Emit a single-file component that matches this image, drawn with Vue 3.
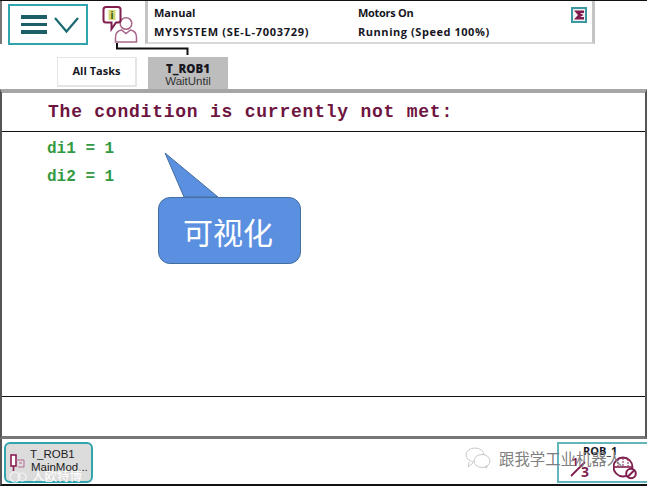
<template>
  <div class="screen">
    <header class="top">
      <button class="menu" type="button">
        <span class="bars"><i></i><i></i><i></i></span>
        <svg class="chev" width="26" height="18" viewBox="0 0 26 18"><path d="M1 2 L12.500 15.500 L24 2" fill="none" stroke="#1c6a72" stroke-width="2.200"/></svg>
      </button>
      <div class="notif">
        <svg width="40" height="43" viewBox="0 0 40 43">
          <circle cx="26" cy="22.500" r="5.800" fill="#fff" stroke="#a7668a" stroke-width="1.500"/>
          <path d="M15.500 41 V36.500 Q15.500 30 21.500 29 L26 32.500 L30.500 29 Q36.500 30 36.500 36.500 V41 Z" fill="#fff" stroke="#a7668a" stroke-width="1.500"/>
          <path d="M6 6 H18 Q20.500 6 20.500 8.500 V19 Q20.500 21.500 18 21.500 H16 L11.500 28 V21.500 H6 Q3.500 21.500 3.500 19 V8.500 Q3.500 6 6 6 Z" fill="#fff" stroke="#7f1d4e" stroke-width="2"/>
          <rect x="8.500" y="9" width="7" height="10" fill="#d5d877"/>
          <text x="12" y="18" text-anchor="middle" class="itxt">i</text>
        </svg>
      </div>
      <div class="status">
        <div class="scol first">
          <div>Manual</div>
          <div class="sys">MYSYSTEM (SE-L-7003729)</div>
        </div>
        <div class="scol">
          <div class="motors">Motors On</div>
          <div class="run">Running (Speed 100%)</div>
        </div>
        <svg class="speed" width="16" height="16" viewBox="0 0 16 16">
          <rect width="16" height="16" fill="#3a98a0"/>
          <rect x="2" y="2" width="12" height="12" fill="#f4f0f2"/>
          <path d="M3 3.500 H13 V6 H9 L12.500 8 L9 10 H13 V12.500 H3 L7 8 Z" fill="#7f1d4e"/>
        </svg>
      </div>
    </header>

    <div class="tabs">
      <svg class="link" width="74" height="14" viewBox="0 0 74 14"><path d="M1 0 V5.500 H71.500 V12" fill="none" stroke="#111" stroke-width="2"/></svg>
      <div class="tab plain">All Tasks</div>
      <div class="tab active"><b>T_ROB1</b><span>WaitUntil</span></div>
    </div>

    <main class="panel">
      <div class="head">The condition is currently not met:</div>
      <div class="list">
        <div>di1 = 1</div>
        <div>di2 = 1</div>
        <div class="callout">
          <svg class="tail" width="64" height="50" viewBox="0 0 64 50"><path d="M1 1 L54 45 H20 Z" fill="#5b8fdf" stroke="#44709f" stroke-width="1"/><path d="M19.500 46 H55 V50 H19.500 Z" fill="#5b8fdf"/></svg>
          <span class="calltxt">可视化</span>
        </div>
      </div>
      <div class="foot"></div>
    </main>

    <footer class="bottom">
      <div class="task">
        <svg class="taskicon" width="16" height="18" viewBox="0 0 16 18">
          <rect x="1" y="1" width="5" height="11" fill="#fff" stroke="#8a1f55" stroke-width="1.600"/>
          <path d="M3.500 12 V17" stroke="#8a1f55" stroke-width="1.600"/>
          <path d="M6 6 H14 V13 H8" fill="none" stroke="#b5688f" stroke-width="1"/>
          <path d="M9 9 H12" stroke="#b5688f" stroke-width="1"/>
        </svg>
        <div class="tasktxt"><span class="tname">T_ROB1</span><span>MainMod...</span></div>
      </div>
      <div class="left">
        <svg width="20" height="13" viewBox="0 0 20 13" fill="none" stroke="#f4f4f4" stroke-width="1.200"><circle cx="7" cy="7" r="5"/><circle cx="14" cy="7" r="4"/></svg>
        <span>人欧特博</span>
      </div>
      <div class="rob">
        <span class="robt">ROB_1</span>
        <svg class="ratio" width="28" height="28" viewBox="0 0 28 28">
          <text x="4" y="11" class="rnum small">1</text>
          <path d="M3 21 L17 7" stroke="#7f1d4e" stroke-width="1.800"/>
          <text x="13" y="22" class="rnum">3</text>
        </svg>
        <svg class="nogo" width="28" height="28" viewBox="0 0 28 28" fill="none" stroke="#7f1d4e">
          <circle cx="10" cy="12" r="9.500" stroke-width="1.800"/>
          <path d="M1 12 H19" stroke-width="1.600"/>
          <path d="M5 4 V11 M10 3 V11 M15 4 V11" stroke-width="1" stroke-dasharray="2 1"/>
          <circle cx="18" cy="18.500" r="4.800" fill="#fff" stroke-width="2"/>
          <path d="M15 21.500 L21 15.500" stroke-width="2"/>
        </svg>
      </div>
      <div class="right">
        <svg width="26" height="22" viewBox="0 0 26 22" fill="none" stroke="#c8c8c8" stroke-width="1"><ellipse cx="10" cy="8" rx="9" ry="7"/><ellipse cx="17" cy="14" rx="8" ry="6.500" fill="#fff"/><path d="M4 15 L3 20 L8 16 M20 20 L22 21 L21.500 18"/></svg>
        <span>跟我学工业机器人</span>
      </div>
    </footer>
  </div>
</template>

<script setup>
</script>

<style>
html, body { margin: 0; background: #fff; overflow: hidden; }
</style>

<style scoped>
.screen { width: 647px; height: 487px; background: #fff; display: flex; flex-direction: column; border-top: 1px solid #111; box-sizing: border-box; font-family: "Liberation Sans", "Noto Sans CJK SC", sans-serif; color: #16161e; overflow: hidden; }
.top { display: flex; height: 43px; flex: none; border-left: 2px solid #777; box-sizing: border-box; padding-left: 6px; align-items: flex-start; }
.menu { width: 80px; height: 41px; margin-top: 3px; border: 2px solid #30a5ad; background: #fff; padding: 0 0 0 11px; display: flex; align-items: center; gap: 7px; box-sizing: border-box; }
.bars { display: flex; flex-direction: column; gap: 4px; width: 26px; }
.bars i { display: block; height: 3.500px; background: #1c5f66; }
.chev { flex: none; }
.notif { width: 40px; margin-left: 12px; flex: none; height: 43px; }
.itxt { font-family: "Liberation Sans", sans-serif; font-size: 11px; font-weight: 700; fill: #3d5a10; }
.status { width: 450px; margin-left: 5px; height: 43px; box-sizing: border-box; border-left: 3px solid #c4c4c4; border-right: 3px solid #c4c4c4; border-bottom: 2px solid #d8d8d8; display: flex; padding-left: 6px; position: relative; font-family: "Open Sans", sans-serif; font-size: 11px; font-weight: 700; line-height: 19px; padding-top: 2px; }
.scol { white-space: nowrap; }
.first { width: 204px; }
.sys { letter-spacing: 0.700px; }
.run { letter-spacing: 0.550px; }
.motors { letter-spacing: -0.300px; }
.speed { position: absolute; right: 5px; top: 6px; }
.tabs { position: relative; height: 45px; flex: none; padding: 13px 0 0 57px; box-sizing: border-box; display: flex; gap: 11px; }
.link { position: absolute; left: 116px; top: -1px; }
.tab { width: 80px; box-sizing: border-box; text-align: center; font-family: "Open Sans", sans-serif; font-size: 11px; font-weight: 700; }
.plain { height: 30px; line-height: 26px; border: 1px solid #e4e4e4; border-width: 1px 2px 2px 1px; }
.active { height: 32px; background: #bdbdbd; display: flex; flex-direction: column; align-items: center; padding-top: 6px; line-height: 12px; }
.active b { font-size: 11.500px; }
.active span { font-family: "Liberation Sans", sans-serif; font-weight: 400; font-size: 11.500px; color: #333; }
.panel { flex: none; height: 350px; box-sizing: border-box; border-top: 4px solid #a6a6a6; border-left: 2px solid #555; border-right: 2px solid #555; border-bottom: 3px solid #777; display: flex; flex-direction: column; }
.head { flex: none; height: 39px; box-sizing: border-box; border-bottom: 1px solid #111; padding-left: 46px; padding-top: 9px; font-family: "Liberation Mono", monospace; font-weight: 700; font-size: 18px; letter-spacing: 0.770px; line-height: 20px; color: #6e1440; white-space: pre; }
.list { flex: none; height: 265px; box-sizing: border-box; position: relative; border-bottom: 1px solid #111; padding: 3px 0 0 45px; font-family: "Liberation Mono", monospace; font-weight: 700; font-size: 16px; line-height: 28px; color: #339a42; }
.callout { position: absolute; left: 156px; top: 65px; width: 143px; height: 67px; box-sizing: border-box; background: #5b8fdf; border: 1px solid #44709f; border-radius: 12px; color: #fff; display: flex; align-items: center; justify-content: center; font-size: 30px; line-height: 1; font-weight: 400; font-family: "Noto Sans CJK SC", sans-serif; }
.calltxt { margin-right: 3px; }
.tail { position: absolute; left: 5px; top: -46px; }
.foot { flex: 1; }
.bottom { flex: none; height: 47px; position: relative; border-left: 2px solid #555; border-bottom: 2px solid #111; box-sizing: border-box; display: flex; }
.task { margin: 3px 0 0 2px; width: 89px; height: 41px; box-sizing: border-box; border: 2px solid #30a5ad; border-radius: 6px; background: #dcdcdc; display: flex; align-items: center; padding: 0 0 4px 4px; gap: 4px; }
.taskicon { flex: none; margin-top: 4px; }
.tasktxt { display: flex; flex-direction: column; align-items: center; font-size: 11.500px; line-height: 13px; color: #222; white-space: nowrap; }
.tname { margin-right: 14px; }
.left { position: absolute; left: 6px; top: 30px; display: flex; align-items: center; gap: 4px; font-size: 12.500px; line-height: 14px; color: #fff; white-space: nowrap; font-family: "Noto Sans CJK SC", sans-serif; }
.right { position: absolute; left: 463px; top: 8px; display: flex; align-items: center; gap: 8px; font-size: 15.400px; line-height: 22px; color: #808080; white-space: nowrap; font-family: "Noto Sans CJK SC", sans-serif; }
.rob { position: absolute; left: 555px; top: 3px; width: 90px; height: 41px; box-sizing: border-box; border: 2px solid #62b5bb; border-right: none; font-family: "Open Sans", sans-serif; font-size: 11px; font-weight: 700; }
.robt { position: absolute; left: 24px; top: 0; line-height: 14px; }
.ratio { position: absolute; left: 9px; top: 11px; }
.rnum { font-family: "Open Sans", sans-serif; font-size: 14px; font-weight: 700; fill: #7f1d4e; }
.small { font-size: 11px; }
.nogo { position: absolute; left: 54px; top: 11px; }
</style>
